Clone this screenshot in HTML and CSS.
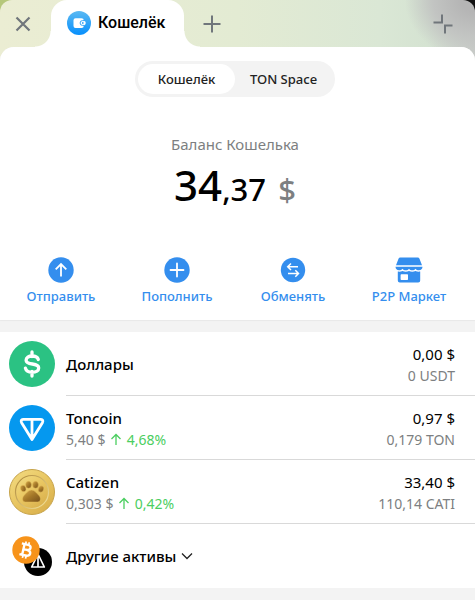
FILE: index.html
```html
<!DOCTYPE html>
<html lang="ru">
<head>
<meta charset="utf-8">
<meta name="viewport" content="width=device-width, initial-scale=1">
<title>Кошелёк</title>
<link rel="stylesheet" href="styles.css">
</head>
<body>
<div class="window">
<header class="tabs">
  <button class="tab-button close" aria-label="Закрыть"><svg width="16" height="16" viewBox="0 0 16 16"><path d="M1.5 1.5l13 13M14.5 1.5l-13 13" stroke="#70767b" stroke-width="2.2"/></svg></button>
  <button class="tab">
    <svg width="24" height="24" viewBox="0 0 24 24"><defs><linearGradient id="wallet" x2="0" y2="1"><stop stop-color="#5bb9f2"/><stop offset="1" stop-color="#078ffc"/></linearGradient></defs><circle cx="12" cy="12" r="12" fill="url(#wallet)"/><path d="M8.500 7.200h6a2.300 2.300 0 0 1 2.300 2.300v.3a2.300 2.300 0 0 1 2 2.300a2.300 2.300 0 0 1-2 2.300v.3a2.300 2.300 0 0 1-2.300 2.300h-6a2 2 0 0 1-2-2V9.200a2 2 0 0 1 2-2z" fill="#fff"/><path d="M17 9.600h-1.500a2.400 2.400 0 0 0 0 4.800H17" fill="none" stroke="#37a5f8"/><circle cx="15.800" cy="12" r=".9" fill="#37a5f8"/></svg>
    <span>Кошелёк</span>
  </button>
  <button class="tab-button" aria-label="Новая вкладка"><svg width="18" height="18" viewBox="0 0 18 18"><path d="M9 .5v17M.5 9h17" stroke="#70767b" stroke-width="2"/></svg></button>
  <button class="tab-button collapse" aria-label="Свернуть"><svg width="20" height="20" viewBox="0 0 20 20"><path d="M.5 8.500h8.500V.5M19.500 11.500H12v8" fill="none" stroke="#70767b" stroke-width="2"/></svg></button>
</header>
<main>
  <section class="summary">
    <nav class="switch"><button class="selected">Кошелёк</button><button>TON Space</button></nav>
    <p class="caption">Баланс Кошелька</p>
    <p class="balance"><span class="whole">34</span>,37 <span class="currency">$</span></p>
    <div class="actions">
      <button><svg width="28" height="28" viewBox="0 0 28 28"><circle cx="14" cy="14" r="12.700" fill="#348eee"/><path d="M14 20.500V8.500M8.700 13.300L14 8l5.300 5.300" fill="none" stroke="#fff" stroke-width="1.800"/></svg>Отправить</button>
      <button><svg width="28" height="28" viewBox="0 0 28 28"><circle cx="14" cy="14" r="12.700" fill="#348eee"/><path d="M14 7.500v13M7.500 14h13" stroke="#fff" stroke-width="1.800" stroke-linecap="round"/></svg>Пополнить</button>
      <button><svg width="28" height="28" viewBox="0 0 28 28"><circle cx="14" cy="14" r="12.200" fill="#348eee"/><path d="M19 10.800H8.800M12 7.500l-3.300 3.300L12 14M9 17.500h10.500M16.300 14.300l3.200 3.200-3.200 3.200" fill="none" stroke="#fff" stroke-width="1.500"/></svg>Обменять</button>
      <button><svg width="28" height="28" viewBox="0 0 28 28"><path d="M5.500 1.500h17a2 2 0 0 1 2 1.200L27 9.300H1l2.500-6.600a2 2 0 0 1 2-1.200zM.5 10.800h27c0 2-1.500 3.500-3.500 3.500-1.500 0-2.700-.5-3.500-1.500-1.500 2-5 2-6.500 0-1.500 2-5 2-6.500 0-.8 1-2 1.500-3.500 1.500-2 0-3.500-1.500-3.500-3.500z" fill="#348eee"/><path fill-rule="evenodd" d="M2.800 15.600c2 .2 3.500 0 4.700-.7 2 1 4.500 1 6.500 0 2 1 4.500 1 6.500 0 1.200.7 2.700.9 4.700.7v8.900a2 2 0 0 1-2 2H4.800a2 2 0 0 1-2-2zM5.600 19v4.300q0 .7.7.7h6q.7 0 .7-.7V19q0-.7-.7-.7h-6q-.7 0-.7.700z" fill="#348eee"/></svg>P2P Маркет</button>
    </div>
  </section>
  <ul class="assets">
    <li>
      <svg class="coin" viewBox="0 0 46 46"><circle cx="23" cy="23" r="23" fill="#2bc283"/><path d="M23 11v4.500M23 30.500V35M29.300 18.500c-.7-2.200-3-3.500-6.200-3.500-3.500 0-6 1.700-6 4.200 0 5.800 12.600 1.800 12.600 7.700 0 2.700-2.700 4.400-6.500 4.400-3.600 0-6.200-1.600-6.800-4.100" fill="none" stroke="#fff" stroke-width="3.300" stroke-linecap="round"/></svg>
      <div class="row"><div class="name">Доллары</div><div class="value"><div>0,00 $</div><div class="sub">0 USDT</div></div></div>
    </li>
    <li>
      <svg class="coin" viewBox="0 0 46 46"><circle cx="23" cy="23" r="23" fill="#0598ef"/><path d="M14.200 14.300h17.600q3 .4 1.600 3.400L23 34.500 12.600 17.700q-1.400-3 1.600-3.400zM23 14.300V33" fill="none" stroke="#fff" stroke-width="2.800" stroke-linejoin="round"/></svg>
      <div class="row"><div class="name">Toncoin<div class="sub">5,40 $ <svg class="up" viewBox="0 0 12 12"><path d="M6 12V1.500M1.500 6L6 1.500 10.500 6"/></svg> <span class="gain">4,68%</span></div></div><div class="value"><div>0,97 $</div><div class="sub">0,179 TON</div></div></div>
    </li>
    <li>
      <svg class="coin" viewBox="0 0 46 46"><defs><linearGradient id="gold" x2=".8" y2="1"><stop stop-color="#f3dc84"/><stop offset=".5" stop-color="#e9c763"/><stop offset="1" stop-color="#d9af4b"/></linearGradient><linearGradient id="rim" x2="1" y2="1"><stop stop-color="#a98334"/><stop offset="1" stop-color="#f8e7a0"/></linearGradient><linearGradient id="paw" x2="1" y2="1"><stop stop-color="#d5a84a"/><stop offset=".5" stop-color="#a47728"/><stop offset="1" stop-color="#76501b"/></linearGradient></defs><circle cx="23" cy="23" r="22.500" fill="url(#gold)" stroke="#c6a34b"/><circle cx="23" cy="23" r="16.500" fill="url(#gold)" stroke="url(#rim)" stroke-width="1.200"/><g fill="url(#paw)" stroke="#e5bc5b" stroke-width=".5"><ellipse cx="14.200" cy="19.500" rx="2.700" ry="3.300" transform="rotate(-22 14.200 19.500)"/><ellipse cx="19.500" cy="15.800" rx="2.900" ry="3.500"/><ellipse cx="26.500" cy="15.800" rx="2.900" ry="3.500"/><ellipse cx="32" cy="20" rx="2.700" ry="3.300" transform="rotate(22 32 20)"/><path d="M22.500 21c3 0 5 3 7.500 5.500 2.500 2.800 1.500 6.500-1.500 6.500h-12c-3 0-4-3.700-1.500-6.500 2.500-2.500 4.500-5.500 7.500-5.500z"/></g></svg>
      <div class="row"><div class="name">Catizen<div class="sub">0,303 $ <svg class="up" viewBox="0 0 12 12"><path d="M6 12V1.500M1.500 6L6 1.500 10.500 6"/></svg> <span class="gain">0,42%</span></div></div><div class="value"><div>33,40 $</div><div class="sub">110,14 CATI</div></div></div>
    </li>
    <li>
      <svg class="coin" viewBox="0 0 46 46"><circle cx="29" cy="29" r="14" fill="#000"/><path d="M29 21l-6.300 13h12.600zM29 21.500v12" fill="none" stroke="#fff" stroke-width="1.700" stroke-linejoin="round"/><circle cx="17" cy="17" r="13.700" fill="#f7931a"/><g transform="translate(17 17) rotate(13)" fill="none" stroke="#fff"><path d="M-2.700-5.500V5.500M-5.500-5.500H.8c4.200 0 4.200 5.200 0 5.200h-3.500M.8-.3c5.400 0 5.400 5.800 0 5.800h-6.300" stroke-width="2.400"/><path d="M-1.700-8.300v3M1.500-8.300v3M-1.700 5.500v3M1.500 5.500v3" stroke-width="1.700"/></g></svg>
      <div class="row"><button class="name more">Другие активы <svg width="12" height="8" viewBox="0 0 12 8"><path d="M1 1.500l5 5 5-5" fill="none" stroke="#222" stroke-width="1.300"/></svg></button></div>
    </li>
  </ul>
</main>
</div>
</body>
</html>
```
FILE: styles.css
```css
* { box-sizing: border-box; }
body { margin: 0; background: linear-gradient(90deg, #b5c77a 50%, #111 50%); font-family: "Noto Sans", "Open Sans", sans-serif; color: #000; }
p, ul { margin: 0; padding: 0; list-style: none; }
button { border: 0; padding: 0; background: none; font: inherit; color: inherit; cursor: pointer; }
svg { display: block; flex: none; }

.window {
  display: flex;
  flex-direction: column;
  min-height: 100vh;
  border-radius: 12px 12px 0 0;
  background:
    radial-gradient(ellipse 70px 60px at 100% 0, #b5b5b5 20%, #c2c4c2 60%, transparent),
    linear-gradient(90deg, #ebedd3 0%, #e3ebd3 50%, #dae7d5 80%, #d5e3d2 90%, #cacdca 100%);
}
.tabs { display: flex; align-items: center; height: 47px; }
.tab-button { display: grid; place-items: center; width: 56px; height: 46px; }
.close { width: 51px; padding-right: 5px; }
.collapse { width: 64px; margin-left: auto; }
.tab {
  position: relative;
  display: flex;
  align-items: center;
  gap: 7px;
  height: 47px;
  padding: 0 19px 2px 16px;
  border-radius: 16px 16px 0 0;
  background: #fff;
  font: 500 16px/24px Roboto, sans-serif;
}
.tab::before, .tab::after { content: ""; position: absolute; bottom: 0; width: 16px; height: 16px; }
.tab::before { right: 100%; background: radial-gradient(circle at 0 0, transparent 15px, #fff 16px); }
.tab::after { left: 100%; background: radial-gradient(circle at 100% 0, transparent 15px, #fff 16px); }

main { flex: 1; border-radius: 14px 14px 0 0; background: #f3f3f3; }
.summary {
  display: flex;
  flex-direction: column;
  align-items: center;
  padding: 14px 8px 13px 3px;
  border-radius: 14px 14px 0 0;
  background: #fff;
  box-shadow: 0 1px 1px #e8e8e8;
}
.switch { display: flex; padding: 3px; border-radius: 18px; background: #f3f3f3; font-size: 13px; font-weight: 500; line-height: 30px; }
.switch button { min-width: 97px; padding: 0 12px; border-radius: 15px; color: #222; }
.switch .selected { background: #fff; }
.caption { margin-top: 36px; color: #7d7f81; font-size: 15px; line-height: 22px; }
.balance { margin-top: 5px; font-size: 31px; font-weight: 500; line-height: 50px; }
.whole { font-size: 42px; }
.currency { margin-left: 4px; color: #7d7f81; }
.actions { display: grid; grid-template-columns: repeat(4, 1fr); width: 100%; margin-top: 42px; }
.actions button { display: flex; flex-direction: column; align-items: center; gap: 1px; color: #348eee; font-size: 13px; font-weight: 500; line-height: 22px; }

.assets { margin-top: 12px; background: #fff; }
.assets li { display: flex; align-items: center; gap: 11px; padding-left: 9px; }
.coin { width: 46px; height: 46px; }
.row { display: flex; flex: 1; align-items: center; justify-content: space-between; height: 64px; padding: 2px 20px 0 0; border-bottom: 1px solid #d9d9d9; font-size: 15px; line-height: 21px; }
li:last-child .row { padding-top: 0; border-bottom: 0; }
.name { font-weight: 500; }
.value { text-align: right; }
.sub { color: #7d7f81; font-size: 14px; font-weight: 400; }
.up { display: inline-block; width: 12px; height: 12px; margin: 0 1px; fill: none; stroke: #4bce60; stroke-width: 1.3; }
.gain { color: #4bce60; }
.more { display: flex; align-items: center; gap: 5px; }
```
